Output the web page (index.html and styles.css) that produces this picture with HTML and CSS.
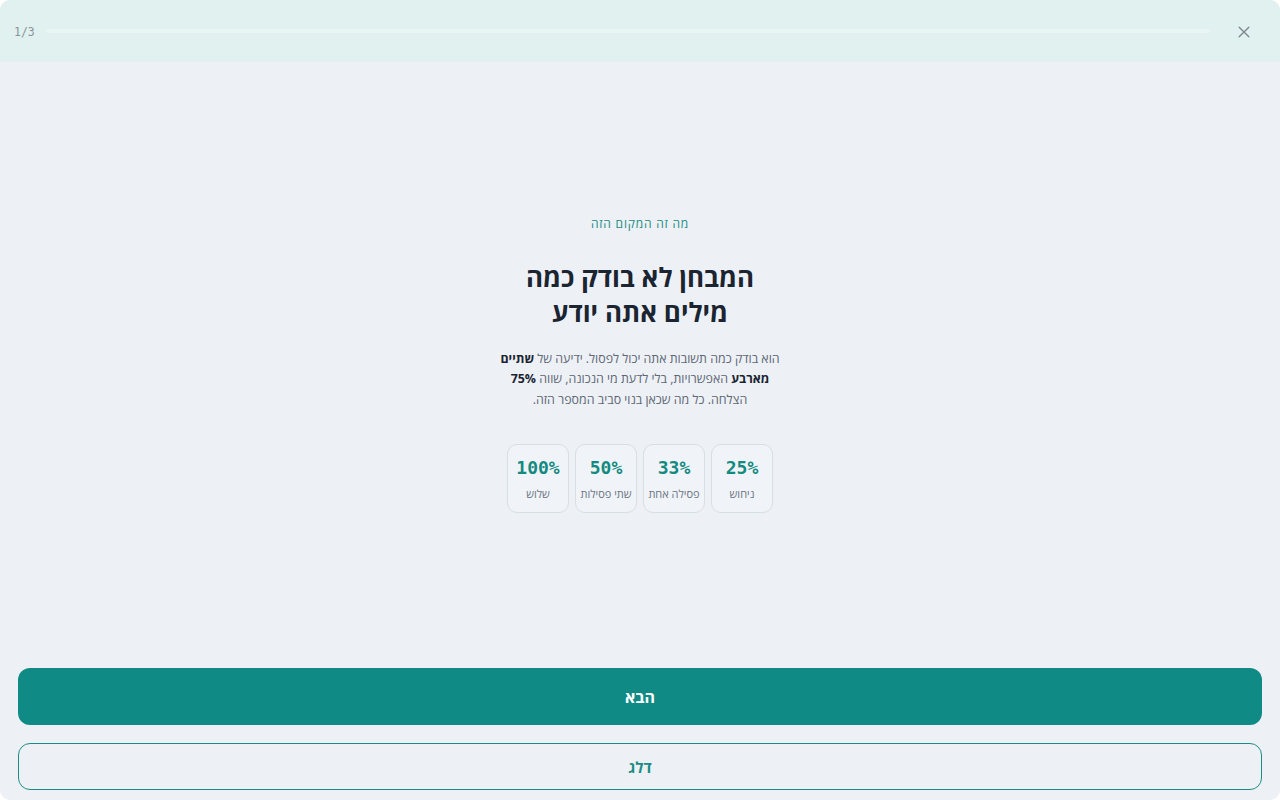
FILE: index.html
```html
<!DOCTYPE html>
<html lang="he" dir="rtl">
<head>
<meta charset="utf-8">
<link rel="stylesheet" href="styles.css">
</head>
<body>
<div class="page">
  <header class="top">
    <button class="close" aria-label="סגור">
      <svg width="12" height="12" viewBox="0 0 12 12"><path d="M1.2 1.2L10.8 10.8M10.8 1.2L1.2 10.8" stroke="#7d8894" stroke-width="1.4" stroke-linecap="round" fill="none"/></svg>
    </button>
    <div class="bar"><div class="fill"></div></div>
    <div class="count" dir="ltr">1/3</div>
  </header>
  <main class="main">
    <div class="eyebrow">מה זה המקום הזה</div>
    <h1 class="title">המבחן לא בודק כמה<br>מילים אתה יודע</h1>
    <p class="desc">הוא בודק כמה תשובות אתה יכול לפסול. ידיעה של <b>שתיים מארבע</b> האפשרויות, בלי לדעת מי הנכונה, שווה <b>75%</b> הצלחה. כל מה שכאן בנוי סביב המספר הזה.</p>
    <div class="stats">
      <div class="stat"><div class="num">25%</div><div class="lbl">ניחוש</div></div>
      <div class="stat"><div class="num">33%</div><div class="lbl">פסילה אחת</div></div>
      <div class="stat"><div class="num">50%</div><div class="lbl">שתי פסילות</div></div>
      <div class="stat"><div class="num">100%</div><div class="lbl">שלוש</div></div>
    </div>
  </main>
  <footer class="actions">
    <button class="btn primary">הבא</button>
    <button class="btn secondary">דלג</button>
  </footer>
</div>
</body>
</html>
```
FILE: styles.css
```css
html, body {
  margin: 0;
  padding: 0;
  background: #ffffff;
}
body {
  font-family: "Open Sans", "DejaVu Sans", sans-serif;
}
.page {
  height: 100vh;
  display: flex;
  flex-direction: column;
  background: #edf1f6;
  border-radius: 10px;
  overflow: hidden;
}
.top {
  height: 62px;
  flex: 0 0 62px;
  background: #e0f1ef;
  display: flex;
  align-items: center;
  padding: 0 14px;
  box-sizing: border-box;
}
.close {
  background: none;
  border: 0;
  padding: 0;
  width: 44px;
  height: 24px;
  display: flex;
  align-items: center;
  justify-content: center;
  margin-top: 2px;
  margin-left: 12px;
  cursor: pointer;
}
.bar {
  flex: 1;
  height: 4px;
  border-radius: 2px;
  background: #e9f6f4;
  margin-left: 11px;
}
.count {
  font-family: "DejaVu Sans Mono", monospace;
  font-size: 11.5px;
  color: #8a949e;
  margin-top: 1px;
}
.main {
  flex: 1;
  display: flex;
  flex-direction: column;
  align-items: center;
  justify-content: center;
  padding-bottom: 1px;
}
.eyebrow {
  font-size: 12px;
  line-height: 16px;
  letter-spacing: 0.8px;
  color: #1b8c84;
}
.title {
  margin: 28px 0 0;
  font-size: 26px;
  line-height: 35px;
  font-weight: 700;
  color: #1b2431;
  text-align: center;
}
.desc {
  margin: 19px 0 0;
  width: 292px;
  font-size: 12.4px;
  line-height: 20.5px;
  color: #5d6775;
  text-align: center;
}
.desc b {
  color: #1b2431;
  font-weight: 700;
}
.stats {
  display: flex;
  gap: 6px;
  margin-top: 34px;
}
.stat {
  width: 62px;
  height: 69px;
  box-sizing: border-box;
  border: 1px solid #d6dee6;
  border-radius: 10px;
  background: #f0f3f8;
  display: flex;
  flex-direction: column;
  align-items: center;
  padding-top: 10px;
}
.num {
  font-family: "DejaVu Sans Mono", monospace;
  font-weight: 700;
  font-size: 18px;
  line-height: 26px;
  color: #138a80;
  direction: ltr;
}
.lbl {
  font-size: 11px;
  line-height: 16px;
  color: #6b7583;
  margin-top: 5px;
  white-space: nowrap;
}
.actions {
  display: flex;
  flex-direction: column;
  gap: 18px;
  padding: 0 18px 10px;
}
.btn {
  font-family: inherit;
  font-weight: 700;
  border-radius: 12px;
  cursor: pointer;
  width: 100%;
}
.primary {
  height: 57px;
  background: #0f8a84;
  border: 0;
  color: #ffffff;
  font-size: 16px;
}
.secondary {
  height: 47px;
  background: transparent;
  border: 1px solid #1b8c84;
  color: #1b8c84;
  font-size: 15px;
}
```
